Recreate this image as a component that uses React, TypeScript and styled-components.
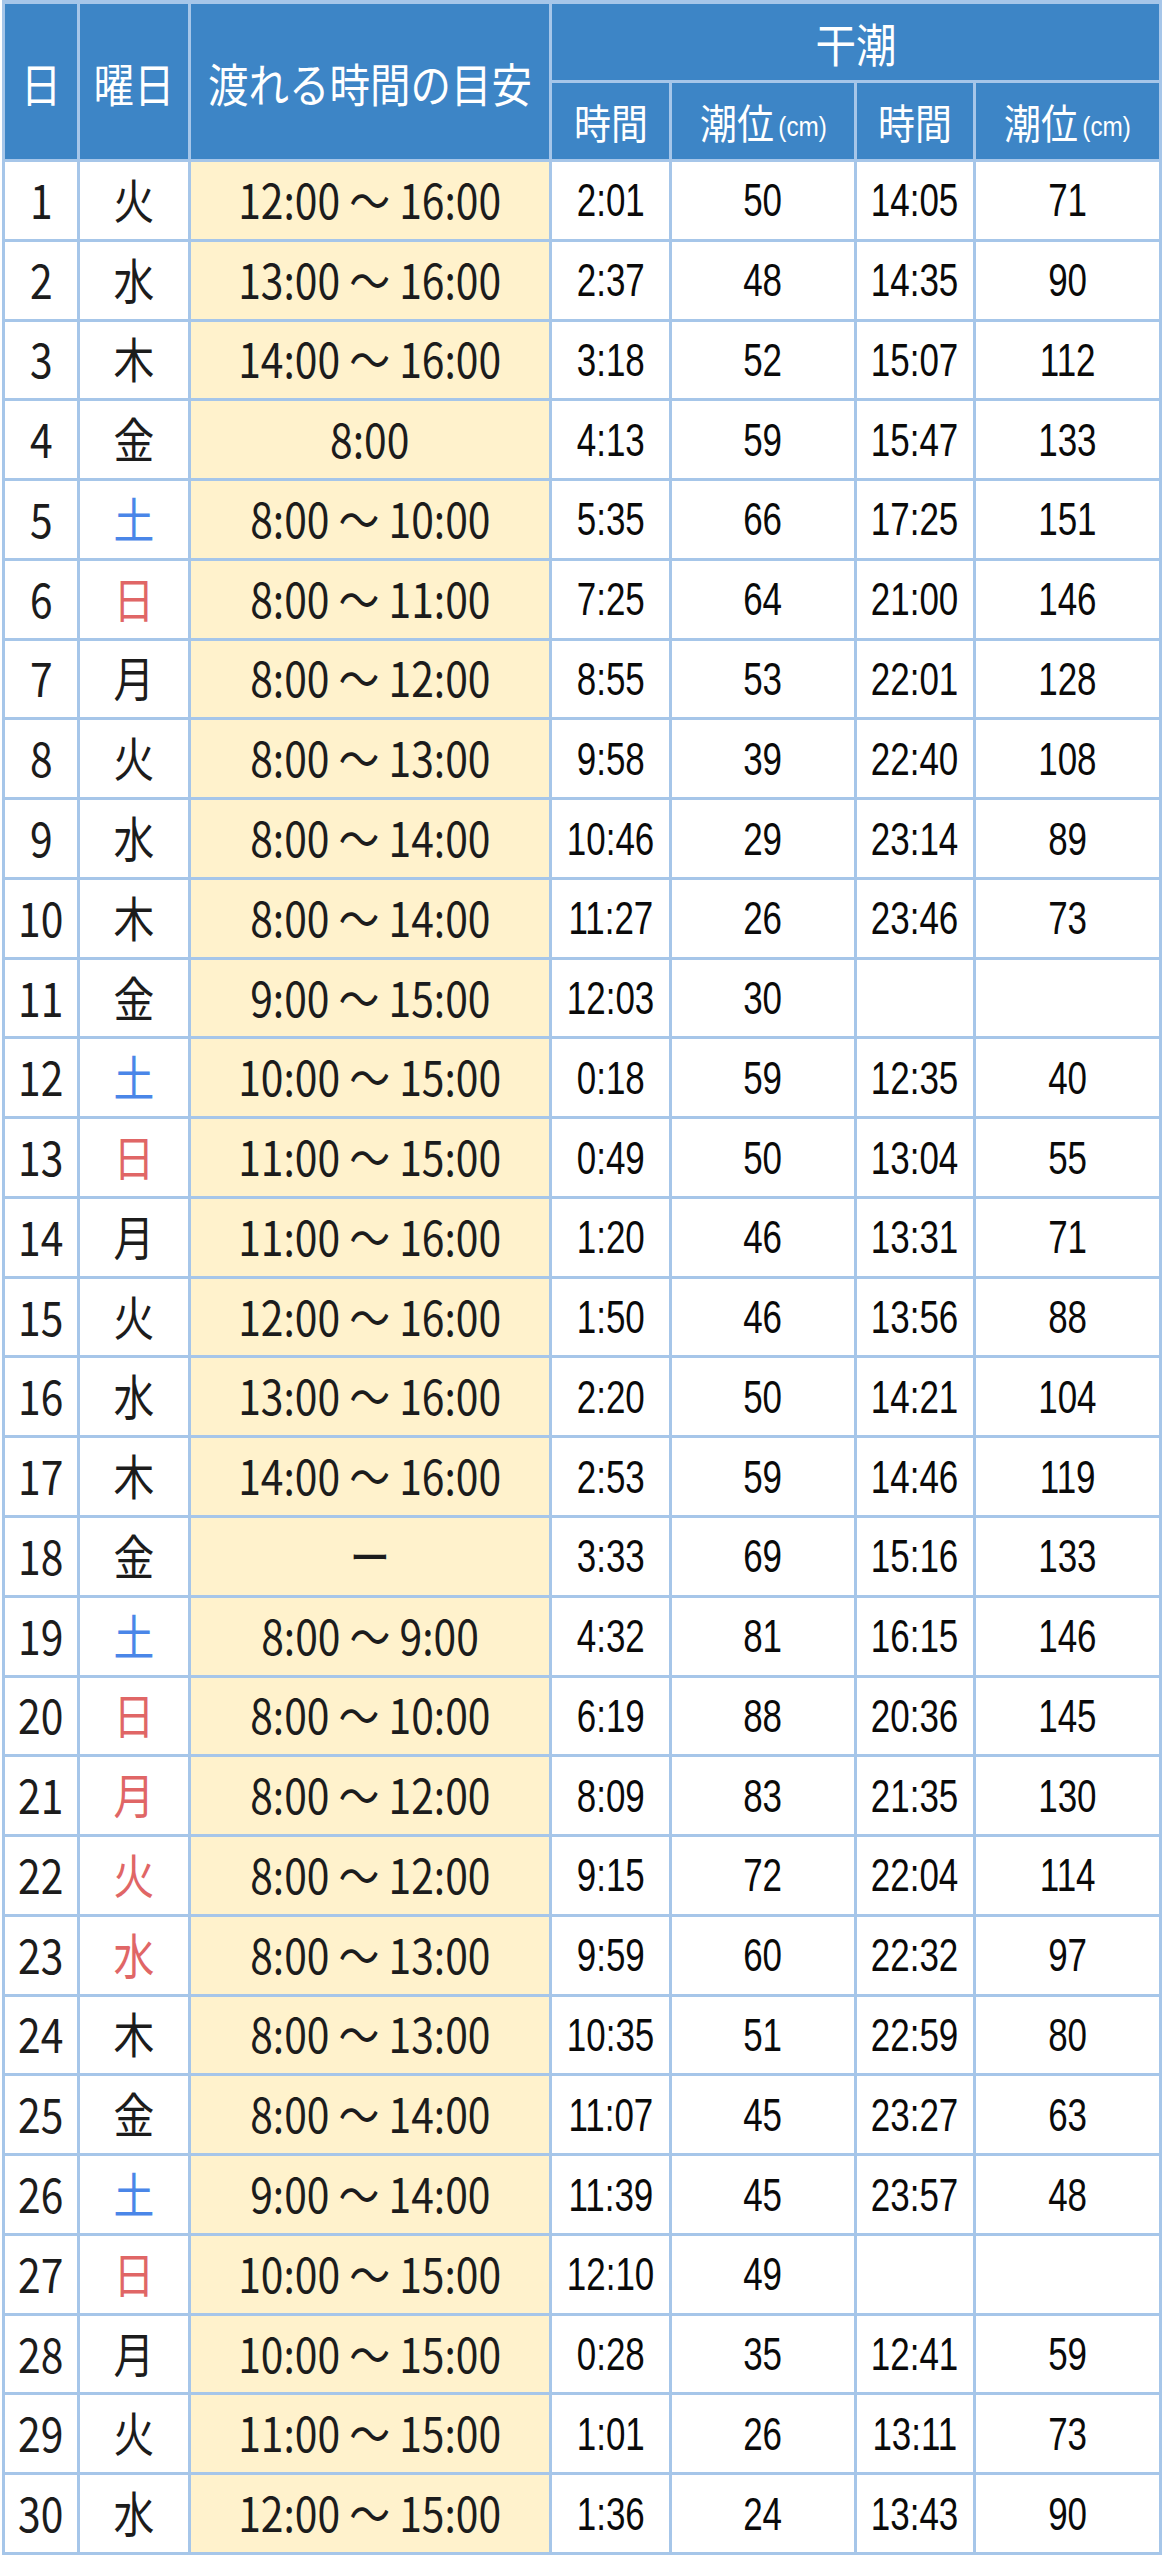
import React from 'react';
import styled, { createGlobalStyle } from 'styled-components';

const GlobalStyle = createGlobalStyle`
  html, body {
    margin: 0;
    padding: 0;
    background: #ffffff;
  }
  body {
    font-family: "Noto Sans CJK JP", "Noto Sans", sans-serif;
  }
`;

const LINE = '#a6c6e9';
const HEAD = '#3d85c6';
const WINDOW = '#fff2cc';

type Day = 'plain' | 'sat' | 'hol';

interface Row {
  d: number;
  w: string;
  day: Day;
  window: string;
  t1: string;
  h1: string;
  t2: string;
  h2: string;
}

const rows: Row[] = [
  { d: 1, w: '火', day: 'plain', window: '12:00 ～ 16:00', t1: '2:01', h1: '50', t2: '14:05', h2: '71' },
  { d: 2, w: '水', day: 'plain', window: '13:00 ～ 16:00', t1: '2:37', h1: '48', t2: '14:35', h2: '90' },
  { d: 3, w: '木', day: 'plain', window: '14:00 ～ 16:00', t1: '3:18', h1: '52', t2: '15:07', h2: '112' },
  { d: 4, w: '金', day: 'plain', window: '8:00', t1: '4:13', h1: '59', t2: '15:47', h2: '133' },
  { d: 5, w: '土', day: 'sat', window: '8:00 ～ 10:00', t1: '5:35', h1: '66', t2: '17:25', h2: '151' },
  { d: 6, w: '日', day: 'hol', window: '8:00 ～ 11:00', t1: '7:25', h1: '64', t2: '21:00', h2: '146' },
  { d: 7, w: '月', day: 'plain', window: '8:00 ～ 12:00', t1: '8:55', h1: '53', t2: '22:01', h2: '128' },
  { d: 8, w: '火', day: 'plain', window: '8:00 ～ 13:00', t1: '9:58', h1: '39', t2: '22:40', h2: '108' },
  { d: 9, w: '水', day: 'plain', window: '8:00 ～ 14:00', t1: '10:46', h1: '29', t2: '23:14', h2: '89' },
  { d: 10, w: '木', day: 'plain', window: '8:00 ～ 14:00', t1: '11:27', h1: '26', t2: '23:46', h2: '73' },
  { d: 11, w: '金', day: 'plain', window: '9:00 ～ 15:00', t1: '12:03', h1: '30', t2: '', h2: '' },
  { d: 12, w: '土', day: 'sat', window: '10:00 ～ 15:00', t1: '0:18', h1: '59', t2: '12:35', h2: '40' },
  { d: 13, w: '日', day: 'hol', window: '11:00 ～ 15:00', t1: '0:49', h1: '50', t2: '13:04', h2: '55' },
  { d: 14, w: '月', day: 'plain', window: '11:00 ～ 16:00', t1: '1:20', h1: '46', t2: '13:31', h2: '71' },
  { d: 15, w: '火', day: 'plain', window: '12:00 ～ 16:00', t1: '1:50', h1: '46', t2: '13:56', h2: '88' },
  { d: 16, w: '水', day: 'plain', window: '13:00 ～ 16:00', t1: '2:20', h1: '50', t2: '14:21', h2: '104' },
  { d: 17, w: '木', day: 'plain', window: '14:00 ～ 16:00', t1: '2:53', h1: '59', t2: '14:46', h2: '119' },
  { d: 18, w: '金', day: 'plain', window: 'ー', t1: '3:33', h1: '69', t2: '15:16', h2: '133' },
  { d: 19, w: '土', day: 'sat', window: '8:00 ～ 9:00', t1: '4:32', h1: '81', t2: '16:15', h2: '146' },
  { d: 20, w: '日', day: 'hol', window: '8:00 ～ 10:00', t1: '6:19', h1: '88', t2: '20:36', h2: '145' },
  { d: 21, w: '月', day: 'hol', window: '8:00 ～ 12:00', t1: '8:09', h1: '83', t2: '21:35', h2: '130' },
  { d: 22, w: '火', day: 'hol', window: '8:00 ～ 12:00', t1: '9:15', h1: '72', t2: '22:04', h2: '114' },
  { d: 23, w: '水', day: 'hol', window: '8:00 ～ 13:00', t1: '9:59', h1: '60', t2: '22:32', h2: '97' },
  { d: 24, w: '木', day: 'plain', window: '8:00 ～ 13:00', t1: '10:35', h1: '51', t2: '22:59', h2: '80' },
  { d: 25, w: '金', day: 'plain', window: '8:00 ～ 14:00', t1: '11:07', h1: '45', t2: '23:27', h2: '63' },
  { d: 26, w: '土', day: 'sat', window: '9:00 ～ 14:00', t1: '11:39', h1: '45', t2: '23:57', h2: '48' },
  { d: 27, w: '日', day: 'hol', window: '10:00 ～ 15:00', t1: '12:10', h1: '49', t2: '', h2: '' },
  { d: 28, w: '月', day: 'plain', window: '10:00 ～ 15:00', t1: '0:28', h1: '35', t2: '12:41', h2: '59' },
  { d: 29, w: '火', day: 'plain', window: '11:00 ～ 15:00', t1: '1:01', h1: '26', t2: '13:11', h2: '73' },
  { d: 30, w: '水', day: 'plain', window: '12:00 ～ 15:00', t1: '1:36', h1: '24', t2: '13:43', h2: '90' },
];

const dayColor: Record<Day, string> = {
  plain: '#1c1c1c',
  sat: '#4a86e8',
  hol: '#e06666',
};

const Table = styled.div`
  display: grid;
  grid-template-columns: 72px 108px 358px 117px 182px 116px 183px;
  grid-template-rows: 76px 76px repeat(30, 76.77px);
  gap: 3px;
  width: max-content;
  margin-left: 2px;
  padding: 4px 3px 3px;
  background: ${LINE};
`;

const HeadCell = styled.div<{ $span?: number; $rows?: number }>`
  grid-column: span ${(p) => p.$span ?? 1};
  grid-row: span ${(p) => p.$rows ?? 1};
  display: flex;
  align-items: center;
  justify-content: center;
  background: ${HEAD};
  color: #ffffff;
  font-family: "Noto Sans CJK JP", sans-serif;
  font-size: ${(p) => ((p.$rows ?? 1) > 1 || (p.$span ?? 1) > 1 ? 46 : 41)}px;
  line-height: 1;
  white-space: nowrap;
`;

const Cell = styled.div<{ $window?: boolean }>`
  display: flex;
  align-items: center;
  justify-content: center;
  background: ${(p) => (p.$window ? WINDOW : '#ffffff')};
  line-height: 1;
  white-space: nowrap;
  overflow: hidden;
`;

// the source picture is squeezed sideways, so every label is narrowed
const Squeeze = styled.span<{ $k: number }>`
  display: inline-block;
  transform: scaleX(${(p) => p.$k});
`;

const JpText = styled(Squeeze)<{ $color?: string }>`
  font-family: "Noto Sans CJK JP", sans-serif;
  font-size: 48px;
  color: ${(p) => p.$color ?? '#1c1c1c'};
  margin-top: -5px;
`;

const TideText = styled(Squeeze)`
  font-family: "Liberation Sans", Arial, sans-serif;
  font-size: 46px;
  color: #0a0a0a;
`;

const Unit = styled.span`
  font-family: "Liberation Sans", Arial, sans-serif;
  font-size: 27px;
  margin-left: 5px;
  vertical-align: 3px;
`;

function LevelHead() {
  return (
    <HeadCell>
      <Squeeze $k={0.9}>
        潮位<Unit>(cm)</Unit>
      </Squeeze>
    </HeadCell>
  );
}

export default function App() {
  return (
    <>
      <GlobalStyle />
      <Table>
        <HeadCell $rows={2}><Squeeze $k={0.88}>日</Squeeze></HeadCell>
        <HeadCell $rows={2}><Squeeze $k={0.88}>曜日</Squeeze></HeadCell>
        <HeadCell $rows={2}><Squeeze $k={0.88}>渡れる時間の目安</Squeeze></HeadCell>
        <HeadCell $span={4}><Squeeze $k={0.88}>干潮</Squeeze></HeadCell>
        <HeadCell><Squeeze $k={0.9}>時間</Squeeze></HeadCell>
        <LevelHead />
        <HeadCell><Squeeze $k={0.9}>時間</Squeeze></HeadCell>
        <LevelHead />

        {rows.map((r) => (
          <React.Fragment key={r.d}>
            <Cell><JpText $k={0.85}>{r.d}</JpText></Cell>
            <Cell><JpText $k={0.85} $color={dayColor[r.day]}>{r.w}</JpText></Cell>
            <Cell $window><JpText $k={0.85}>{r.window}</JpText></Cell>
            <Cell><TideText $k={0.76}>{r.t1}</TideText></Cell>
            <Cell><TideText $k={0.76}>{r.h1}</TideText></Cell>
            <Cell><TideText $k={0.76}>{r.t2}</TideText></Cell>
            <Cell><TideText $k={0.76}>{r.h2}</TideText></Cell>
          </React.Fragment>
        ))}
      </Table>
    </>
  );
}
